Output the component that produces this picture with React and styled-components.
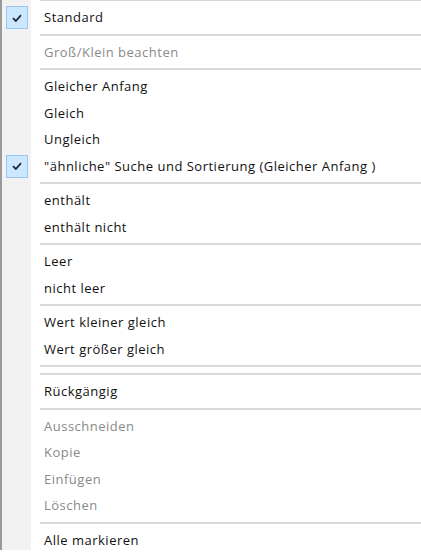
import React from 'react';
import styled, { createGlobalStyle } from 'styled-components';

const GlobalStyle = createGlobalStyle`
  html, body {
    margin: 0;
    padding: 0;
    background: #ffffff;
  }
  body {
    font-family: "Open Sans", "Noto Sans", "Liberation Sans", sans-serif;
  }
`

const Menu = styled.div`
  width: 421px;
  height: 554px;
  overflow: hidden;
  display: flex;
  flex-direction: column;
  background: linear-gradient(to right, #9a9a9a 0, #9a9a9a 2px, #f2f2f2 2px, #f2f2f2 31px, #ffffff 31px);
  box-sizing: border-box;
  margin-top: -4px;
`

const Item = styled.div`
  height: 26.5px;
  flex: none;
  display: flex;
  align-items: center;
  position: relative;
  padding-left: 44px;
  font-size: 13px;
  letter-spacing: 0.5px;
  font-weight: 500;
  color: ${(p) => (p.disabled ? '#8a8a8a' : '#111111')};
  white-space: nowrap;
`

const Check = styled.div`
  position: absolute;
  left: 6px;
  top: 2px;
  width: 20px;
  height: 21px;
  background: #cce8ff;
  border: 1px solid #99c6ee;
  display: flex;
  align-items: center;
  justify-content: center;
`

const Separator = styled.div`
  height: 8px;
  flex: none;
  display: flex;
  align-items: center;
  padding-left: 40px;

  &::after {
    content: '';
    flex: 1;
    height: 2px;
    background: #d9d9d9;
  }
`

const CheckMark = () => (
  <svg width="10" height="8" viewBox="0 0 10 8">
    <path d="M1 4.2 L3.8 7 L9 1.2" fill="none" stroke="#1d2a3e" strokeWidth="1.8" />
  </svg>
)

const entries = [
  { sep: true },
  { label: 'Standard', checked: true },
  { sep: true },
  { label: 'Groß/Klein beachten', disabled: true },
  { sep: true },
  { label: 'Gleicher Anfang' },
  { label: 'Gleich' },
  { label: 'Ungleich' },
  { label: '"ähnliche" Suche und Sortierung (Gleicher Anfang )', checked: true },
  { sep: true },
  { label: 'enthält' },
  { label: 'enthält nicht' },
  { sep: true },
  { label: 'Leer' },
  { label: 'nicht leer' },
  { sep: true },
  { label: 'Wert kleiner gleich' },
  { label: 'Wert größer gleich' },
  { sep: true },
  { sep: true },
  { label: 'Rückgängig' },
  { sep: true },
  { label: 'Ausschneiden', disabled: true },
  { label: 'Kopie', disabled: true },
  { label: 'Einfügen', disabled: true },
  { label: 'Löschen', disabled: true },
  { sep: true },
  { label: 'Alle markieren' },
]

function App() {
  return (
    <>
      <GlobalStyle />
      <Menu>
        {entries.map((e, i) =>
          e.sep ? (
            <Separator key={i} />
          ) : (
            <Item key={i} disabled={e.disabled}>
              {e.checked && (
                <Check>
                  <CheckMark />
                </Check>
              )}
              {e.label}
            </Item>
          )
        )}
      </Menu>
    </>
  );
}

export default App;
